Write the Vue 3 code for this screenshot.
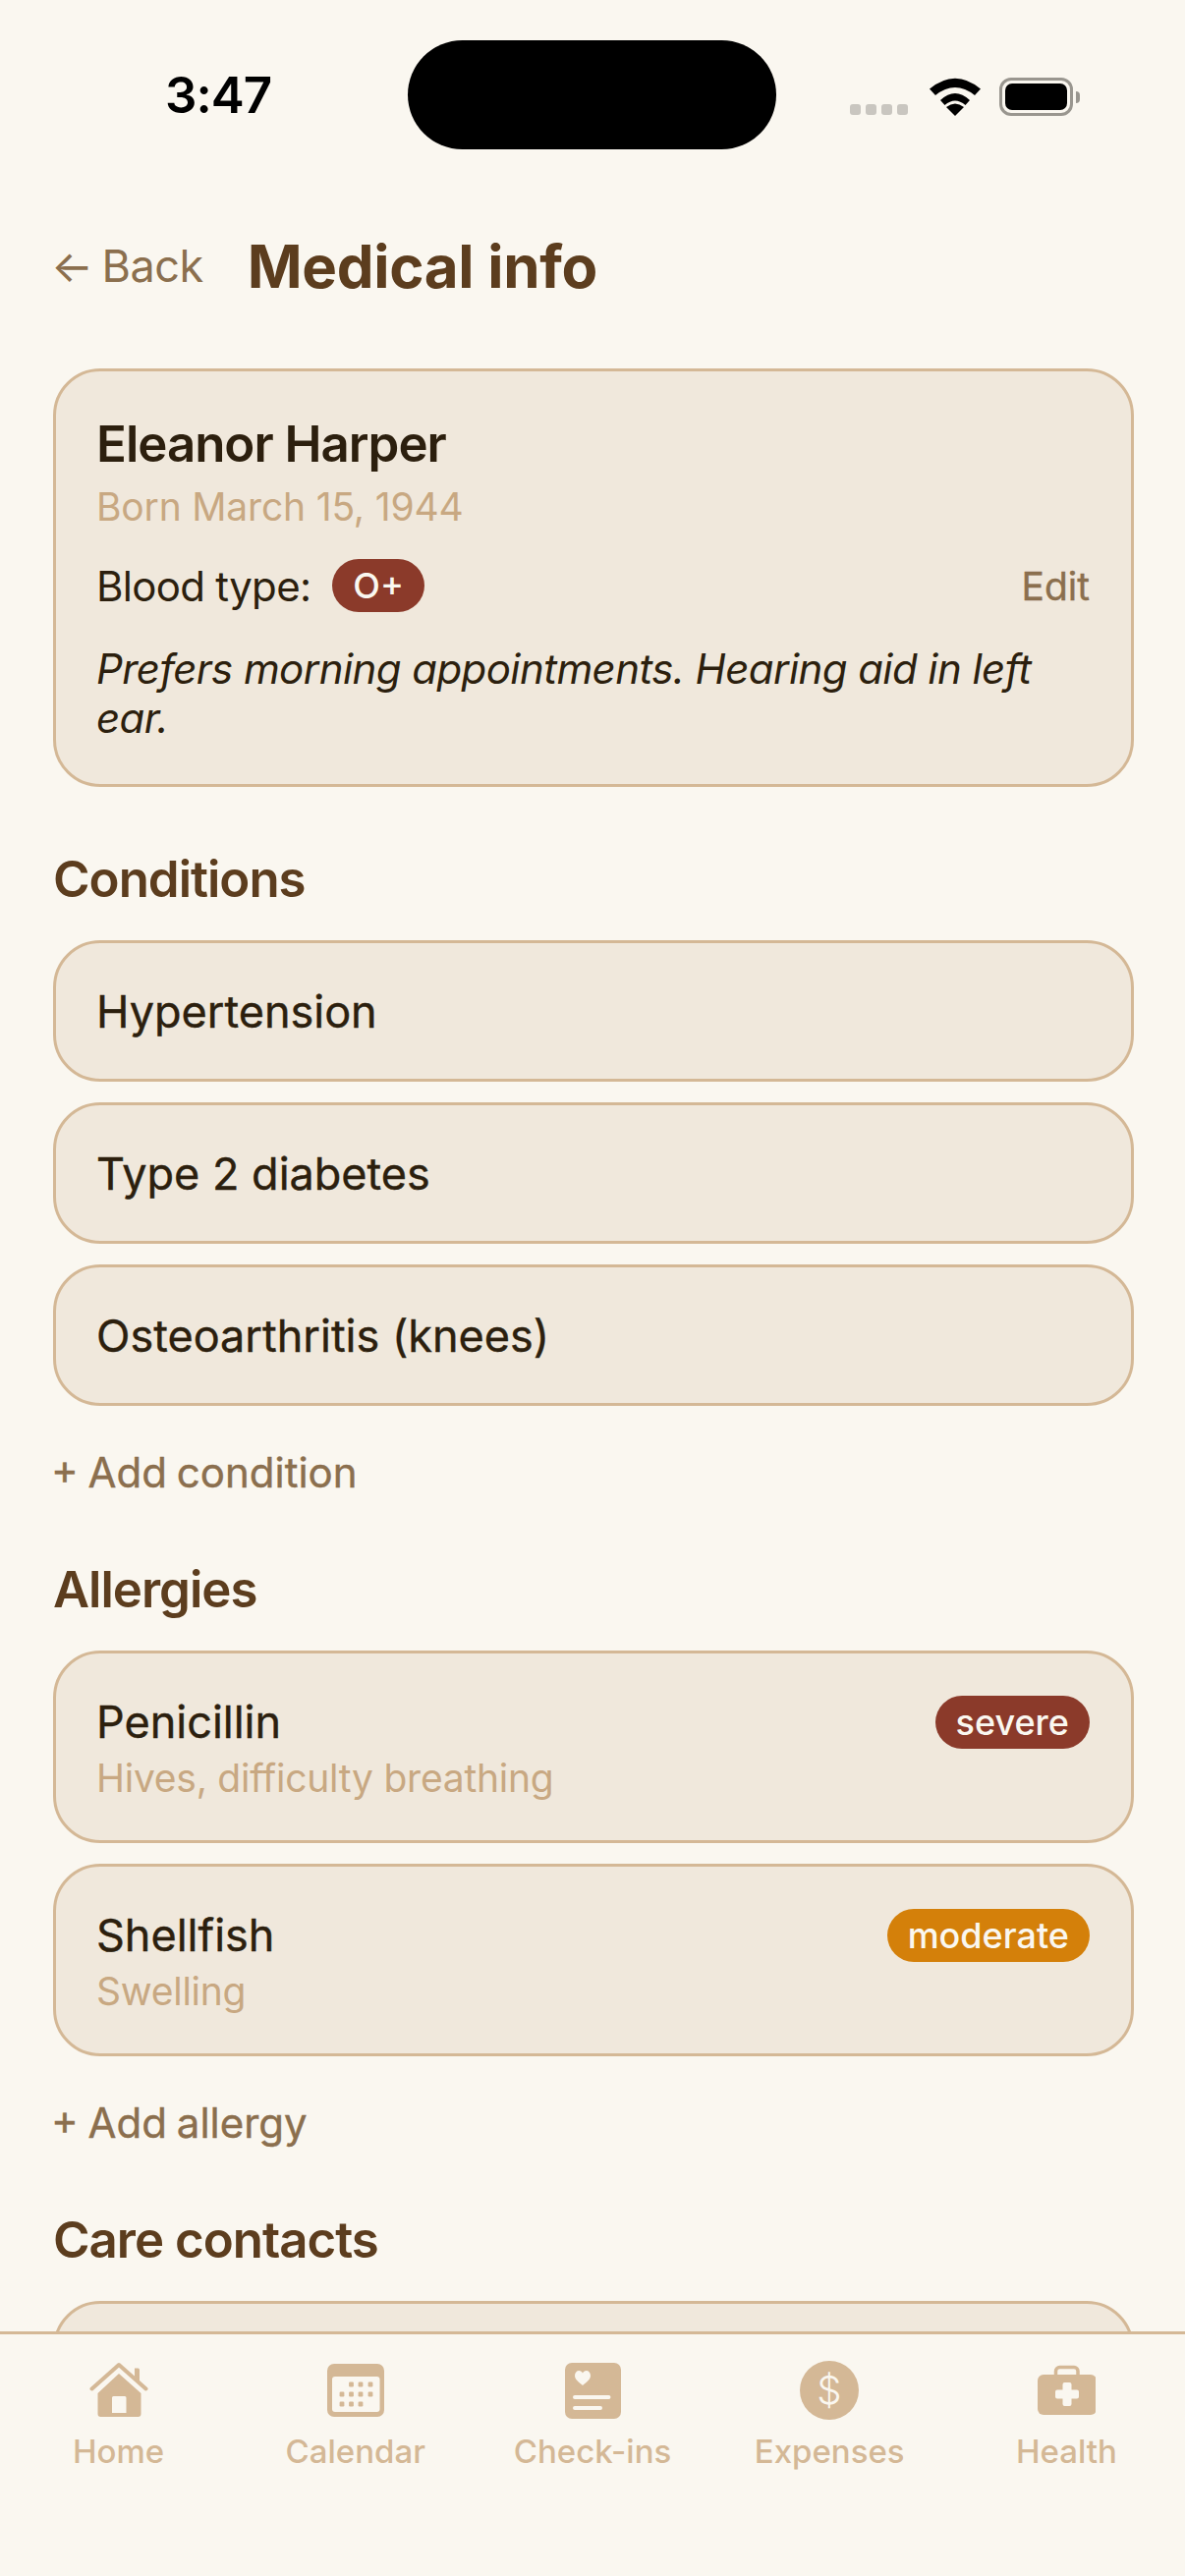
<template>
  <div class="phone">
    <header class="status-bar">
      <span class="clock">3:47</span>
      <div class="island"></div>
      <div class="status-icons">
        <div class="signal"><i v-for="n in 4" :key="n"></i></div>
        <svg class="wifi" width="54" height="40" viewBox="0 0 54 40">
          <path d="M27 40 L18 31 Q27 24 36 31 Z" fill="#000" />
          <path d="M12 24 Q27 10 42 24 L37.5 29 Q27 20 16.5 29 Z" fill="#000" />
          <path d="M1 12.5 Q27 -9 53 12.5 L47 19 Q27 3 7 19 Z" fill="#000" />
        </svg>
        <div class="battery"><div class="battery-fill"></div></div>
        <div class="battery-cap"></div>
      </div>
    </header>

    <main class="content">
      <div class="page-head">
        <span class="back">← Back</span>
        <h1>Medical info</h1>
      </div>

      <section class="card profile">
        <div class="name">Eleanor Harper</div>
        <div class="muted">Born March 15, 1944</div>
        <div class="blood-row">
          <span>Blood type:</span>
          <span class="badge severe">O+</span>
          <span class="edit">Edit</span>
        </div>
        <p class="note">Prefers morning appointments. Hearing aid in left ear.</p>
      </section>

      <h2>Conditions</h2>
      <div class="stack">
        <div class="card row" v-for="c in conditions" :key="c">{{ c }}</div>
      </div>
      <div class="add">+ Add condition</div>

      <h2>Allergies</h2>
      <div class="stack">
        <div class="card allergy" v-for="a in allergies" :key="a.name">
          <div>
            <div class="allergy-name">{{ a.name }}</div>
            <div class="muted small">{{ a.reaction }}</div>
          </div>
          <span class="badge" :class="a.level">{{ a.level }}</span>
        </div>
      </div>
      <div class="add">+ Add allergy</div>

      <h2>Care contacts</h2>
      <div class="card row"></div>
    </main>

    <nav class="tabs">
      <div class="tab">
        <svg width="60" height="60" viewBox="0 0 60 60">
          <path d="M46 7.5 h3.5 a1.5 1.5 0 0 1 1.5 1.5 V21 L46 16 Z" fill="#d4b896" />
          <path d="M2.5 28.5 L30 4 L57.5 28.5" fill="none" stroke="#d4b896" stroke-width="4" stroke-linecap="round" stroke-linejoin="round" />
          <path fill-rule="evenodd" d="M30 13 L52.5 33 V54 a3 3 0 0 1 -3 3 H11.5 a3 3 0 0 1 -3 -3 V33 Z M24.5 36 a1.5 1.5 0 0 0 -1.5 1.5 V53 H37.5 V37.5 a1.5 1.5 0 0 0 -1.5 -1.5 Z" fill="#d4b896" />
        </svg>
        <span>Home</span>
      </div>
      <div class="tab">
        <svg width="60" height="60" viewBox="0 0 60 60">
          <rect x="1" y="3" width="58" height="54" rx="7" fill="#d4b896" />
          <rect x="6" y="16" width="48.5" height="36" rx="3" fill="#faf7f0" />
          <rect v-for="d in calendarDots" :key="d[0] + '-' + d[1]" :x="d[0] - 2.4" :y="d[1] - 2.4" width="4.8" height="4.8" rx="1.2" fill="#d4b896" />
        </svg>
        <span>Calendar</span>
      </div>
      <div class="tab">
        <svg width="60" height="60" viewBox="0 0 60 60">
          <rect x="2" y="2" width="57" height="57" rx="7" fill="#d4b896" />
          <path d="M20 25 C15 21 12 18.5 12 15 C12 12 14 10 16.2 10 C18 10 19.3 11 20 12.5 C20.7 11 22 10 23.8 10 C26 10 28 12 28 15 C28 18.5 25 21 20 25 Z" fill="#faf7f0" />
          <path d="M12 37 H46.5 M12 48 H38" stroke="#faf7f0" stroke-width="4" stroke-linecap="round" />
        </svg>
        <span>Check-ins</span>
      </div>
      <div class="tab">
        <svg width="60" height="60" viewBox="0 0 60 60">
          <circle cx="30" cy="30" r="30" fill="#d4b896" />
          <text x="30" y="44" text-anchor="middle" class="dollar">$</text>
        </svg>
        <span>Expenses</span>
      </div>
      <div class="tab">
        <svg width="60" height="60" viewBox="0 0 60 60">
          <path d="M19.5 15 V10.5 a4 4 0 0 1 4 -4 H38 a4 4 0 0 1 4 4 V15" fill="none" stroke="#d4b896" stroke-width="3.5" />
          <rect x="1" y="14" width="60" height="41" rx="6" fill="#d4b896" />
          <path d="M26.5 24 a2 2 0 0 1 2 -2 H33.5 a2 2 0 0 1 2 2 V29.5 H41 a2 2 0 0 1 2 2 V36.5 a2 2 0 0 1 -2 2 H35.5 V44 a2 2 0 0 1 -2 2 H28.5 a2 2 0 0 1 -2 -2 V38.5 H21 a2 2 0 0 1 -2 -2 V31.5 a2 2 0 0 1 2 -2 H26.5 Z" fill="#faf7f0" />
        </svg>
        <span>Health</span>
      </div>
    </nav>
  </div>
</template>

<script setup>
const conditions = ['Hypertension', 'Type 2 diabetes', 'Osteoarthritis (knees)']

const allergies = [
  { name: 'Penicillin', reaction: 'Hives, difficulty breathing', level: 'severe' },
  { name: 'Shellfish', reaction: 'Swelling', level: 'moderate' },
]

// calendar grid: three rows, offset like a month view
const calendarDots = [
  [25.5, 24], [35, 24], [45, 24],
  [16, 34], [25.5, 34], [35, 34], [45, 34],
  [16, 44], [25.5, 44], [35, 44],
]
</script>

<style>
html, body {
  margin: 0;
  background: #faf7f0;
}
</style>

<style scoped>
.phone {
  width: 1206px;
  height: 2622px;
  display: flex;
  flex-direction: column;
  overflow: hidden;
  background: #faf7f0;
  color: #2c1f0e;
  font-family: Inter, "Noto Sans", sans-serif;
}

.status-bar {
  flex: none;
  height: 198px;
  display: grid;
  grid-template-columns: 415px 375px 1fr;
  align-items: start;
  box-sizing: border-box;
  padding-top: 41px;
}

.clock {
  padding-left: 168px;
  margin-top: 29px;
  font-size: 51px;
  font-weight: 600;
  line-height: 54px;
  letter-spacing: -1px;
  color: #000;
}

.island {
  height: 111px;
  background: #000;
  border-radius: 56px;
}

.status-icons {
  display: flex;
  align-items: flex-end;
  padding: 37px 0 0 75px;
  height: 40px;
}

.signal {
  display: flex;
  gap: 5px;
  margin-right: 21px;
  margin-bottom: 1px;
}

.signal i {
  width: 11px;
  height: 11px;
  border-radius: 3px;
  background: #c9c6c0;
}

.wifi {
  margin-right: 18px;
}

.battery {
  box-sizing: border-box;
  width: 75px;
  height: 39px;
  border: 3px solid #99968f;
  border-radius: 12px;
  padding: 3px;
}

.battery-fill {
  height: 100%;
  background: #000;
  border-radius: 7px;
}

.battery-cap {
  width: 4px;
  height: 12px;
  margin: 0 0 13px 3px;
  background: #99968f;
  border-radius: 0 4px 4px 0;
}

.content {
  flex: 1;
  min-height: 0;
  overflow: hidden;
  padding: 0 52px 0 54px;
}

.page-head {
  display: flex;
  align-items: center;
  gap: 45px;
  height: 145px;
  margin-bottom: 32px;
}

.back {
  margin-left: -2px;
  font-size: 45px;
  letter-spacing: -0.5px;
  word-spacing: -3px;
  color: #8b6f4e;
}

h1 {
  margin: 0;
  font-size: 60px;
  font-weight: 700;
  letter-spacing: -0.3px;
  color: #5c3d1e;
}

h2 {
  margin: 64px 0 32px;
  font-size: 51px;
  line-height: 60px;
  font-weight: 600;
  letter-spacing: -1px;
  color: #5c3d1e;
}

.card {
  box-sizing: border-box;
  background: #f0e8dc;
  border: 3px solid #d4b896;
  border-radius: 48px;
}

.profile {
  height: 426px;
  padding: 44px 42px 42px 41px;
}

.name {
  font-size: 51px;
  font-weight: 600;
  line-height: 60px;
  letter-spacing: -1px;
}

.muted {
  color: #c8a882;
  font-size: 39px;
  line-height: 52px;
  margin-top: 8px;
  letter-spacing: -0.18px;
}

.blood-row {
  display: flex;
  align-items: center;
  gap: 22px;
  font-size: 42px;
  letter-spacing: -0.7px;
  margin-top: 27px;
}

.edit {
  margin-left: auto;
  color: #8b6f4e;
  font-size: 39px;
  letter-spacing: 0;
  -webkit-text-stroke: 0.4px currentColor;
}

.badge {
  font-size: 36px;
  line-height: 54px;
  padding: 0 21px;
  border-radius: 27px;
  color: #faf7f0;
  font-weight: 500;
  letter-spacing: 0;
}

.severe {
  background: #8b3a2a;
}

.moderate {
  background: #d4800a;
}

.note {
  margin: 33px 0 0;
  font-size: 42px;
  line-height: 50px;
  font-style: italic;
  letter-spacing: -0.58px;
}

.stack {
  display: flex;
  flex-direction: column;
  gap: 21px;
}

.row {
  height: 144px;
  display: flex;
  align-items: center;
  padding: 0 42px 0 41px;
  font-size: 45px;
  -webkit-text-stroke: 0.4px currentColor;
}

.allergy {
  height: 196px;
  padding: 43px 42px 42px 41px;
  display: flex;
  justify-content: space-between;
  align-items: flex-start;
}

.allergy-name {
  font-size: 45px;
  line-height: 54px;
  -webkit-text-stroke: 0.4px currentColor;
}

.small {
  font-size: 39px;
  line-height: 46px;
  margin-top: 7px;
  letter-spacing: -0.25px;
}

.add {
  margin: 42px 0 1px -2px;
  font-size: 42px;
  word-spacing: -2px;
  color: #8b6f4e;
  -webkit-text-stroke: 0.4px currentColor;
}

.tabs {
  flex: none;
  box-sizing: border-box;
  height: 249px;
  display: flex;
  align-items: flex-start;
  padding-top: 27px;
  border-top: 3px solid #d4b896;
  background: #faf7f0;
}

.tab {
  flex: 1;
  display: flex;
  flex-direction: column;
  align-items: center;
  gap: 12px;
  font-size: 33px;
  line-height: 40px;
  font-weight: 500;
  color: #d4b896;
}

.dollar {
  font-size: 40px;
  font-weight: 300;
  fill: #faf7f0;
}
</style>
